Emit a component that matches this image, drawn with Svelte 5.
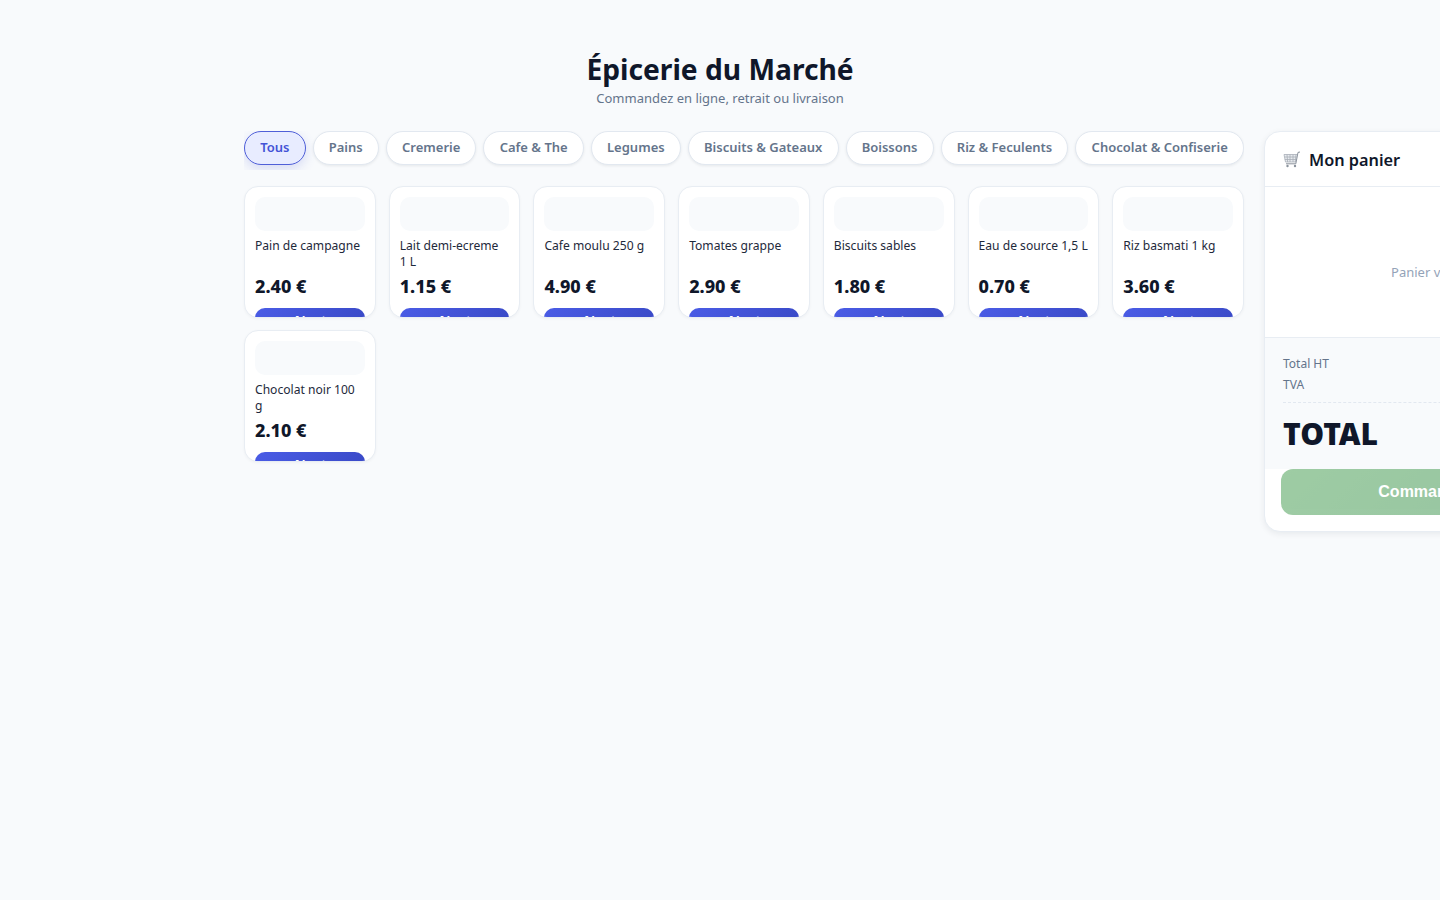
<script>
  const categories = [
    'Tous', 'Pains', 'Cremerie', 'Cafe & The', 'Legumes',
    'Biscuits & Gateaux', 'Boissons', 'Riz & Feculents', 'Chocolat & Confiserie',
  ];

  const products = [
    { name: 'Pain de campagne', price: 2.4 },
    { name: 'Lait demi-ecreme 1\u00a0L', price: 1.15 },
    { name: 'Cafe moulu 250 g', price: 4.9 },
    { name: 'Tomates grappe', price: 2.9 },
    { name: 'Biscuits sables', price: 1.8 },
    { name: 'Eau de source 1,5 L', price: 0.7 },
    { name: 'Riz basmati 1 kg', price: 3.6 },
    { name: 'Chocolat noir 100 g', price: 2.1 },
  ];

  let active = $state('Tous');
</script>

<div class="page">
  <header>
    <h1>Épicerie du Marché</h1>
    <p>Commandez en ligne, retrait ou livraison</p>
  </header>

  <div class="layout">
    <section class="shop">
      <div class="filters">
        {#each categories as cat}
          <button class="pill" class:active={active === cat} onclick={() => (active = cat)}>{cat}</button>
        {/each}
      </div>
      <div class="grid">
        {#each products as p}
          <article class="card">
            <div class="thumb"></div>
            <div class="name">{p.name}</div>
            <div class="price">{p.price.toFixed(2)} €</div>
            <button class="add">+ Ajouter</button>
          </article>
        {/each}
      </div>
    </section>

    <aside class="cart">
      <div class="cart-head">
        <svg class="cart-icon" viewBox="0 0 18 17" width="18" height="17" aria-hidden="true">
          <path class="cart-fill" d="M1 3.5h13l-1 7.5H2.5z" />
          <path class="cart-line" d="M1 3.5h13M1.4 6h12.3M1.8 8.5h11.6M2.5 11h10.4M4 3.5l.6 7.5M7 3.5v7.5M10 3.5v7.5M13 3.5l-.7 7.5M1 3.5l1.5 7.5" />
          <path class="cart-line dark" d="M17 1l-2 .4-2.2 11.4H3" />
          <circle class="cart-wheel" cx="4.5" cy="15" r="1.2" />
          <circle class="cart-wheel" cx="12" cy="15" r="1.2" />
        </svg>
        <h2>Mon panier</h2>
      </div>
      <div class="cart-empty">Panier vide</div>
      <div class="summary">
        <div class="row"><span>Total HT</span><span>0.00 €</span></div>
        <div class="row"><span>TVA</span><span>0.00 €</span></div>
        <div class="row total"><span>TOTAL</span><span>0.00 €</span></div>
      </div>
      <div class="cart-foot">
        <button class="order" disabled>Commander</button>
      </div>
    </aside>
  </div>
</div>

<style>
  :global(body) {
    background: #f8fafc;
    overflow-x: hidden;
    font-family: "Noto Sans", "Open Sans", sans-serif;
    color: #0f172a;
  }

  .page {
    height: 900px;
    overflow: hidden;
  }

  header {
    padding-top: 48px;
    text-align: center;
  }

  h1 {
    margin: 0;
    font-size: 28.2px;
    line-height: 42px;
    font-weight: 700;
    color: #0f172a;
  }

  header p {
    margin: 0;
    font-size: 13px;
    line-height: 17px;
    color: #64748b;
  }

  .layout {
    display: flex;
    gap: 20px;
    width: 952px;
    margin: 24px auto 0;
    align-items: flex-start;
  }

  .shop {
    flex: none;
    width: 1000px;
  }

  .filters {
    display: flex;
    gap: 7px;
    height: 39px;
    overflow: hidden;
  }

  .pill {
    flex: 1 1 auto;
    height: 34px;
    padding: 0 15px 2px;
    border: 1px solid #e2e8f0;
    border-radius: 17px;
    background: #fff;
    color: #64748b;
    font-family: "Noto Sans", sans-serif;
    font-size: 13px;
    font-weight: 600;
    box-shadow: 0 1px 3px rgba(15, 23, 42, 0.08);
    cursor: pointer;
  }

  .pill.active {
    background: #e8ecff;
    border: 1.5px solid #4f5fd8;
    color: #4353d6;
    box-shadow: 0 4px 12px rgba(79, 95, 216, 0.2);
  }

  .grid {
    display: grid;
    grid-template-columns: repeat(7, 1fr);
    grid-auto-rows: 131.7px;
    gap: 12.4px 13px;
    margin-top: 16px;
  }

  .card {
    box-sizing: border-box;
    display: flex;
    flex-direction: column;
    padding: 10px;
    background: #fff;
    border: 1px solid #e8edf3;
    border-radius: 14px;
    overflow: hidden;
    box-shadow: 0 1px 3px rgba(15, 23, 42, 0.04);
  }

  .thumb {
    flex: none;
    height: 34px;
    background: #f8fafc;
    border-radius: 10px;
  }

  .name {
    flex: none;
    height: 32px;
    margin-top: 7px;
    font-size: 12.1px;
    line-height: 16px;
    color: #1e293b;
  }

  .price {
    flex: none;
    margin-top: 4px;
    font-size: 18px;
    line-height: 24px;
    font-weight: 800;
    color: #0f172a;
  }

  .add {
    flex: none;
    height: 25px;
    margin-top: 10px;
    border: none;
    border-radius: 10px;
    background: linear-gradient(135deg, #4a5ce6, #3848c4);
    color: #fff;
    font-family: "Liberation Sans", sans-serif;
    font-size: 13px;
    font-weight: 700;
  }

  .cart {
    flex: none;
    width: 320px;
    background: #fff;
    border: 1px solid #e8edf3;
    border-radius: 16px;
    overflow: hidden;
    box-shadow: 0 2px 6px rgba(15, 23, 42, 0.07);
  }

  .cart-head {
    display: flex;
    align-items: center;
    gap: 8px;
    height: 55px;
    padding: 1px 18px 0;
    border-bottom: 1px solid #e8edf3;
    box-sizing: border-box;
  }

  .cart-icon {
    flex: none;
  }

  .cart-fill {
    fill: #e8ebef;
  }

  .cart-line {
    fill: none;
    stroke: #a8afb8;
    stroke-width: 0.8;
  }

  .cart-line.dark {
    stroke: #8a929c;
    stroke-width: 1;
  }

  .cart-wheel {
    fill: #8a929c;
  }

  h2 {
    margin: 0;
    font-size: 16.3px;
    font-weight: 600;
    color: #0f172a;
  }

  .cart-empty {
    height: 151px;
    padding-top: 20px;
    display: flex;
    align-items: center;
    justify-content: center;
    font-size: 13px;
    color: #94a3b8;
    border-bottom: 1px solid #e8edf3;
    box-sizing: border-box;
  }

  .summary {
    padding: 15px 18px 15px;
    background: #f8fafc;
  }

  .row {
    display: flex;
    justify-content: space-between;
    font-size: 12px;
    line-height: 21px;
    color: #64748b;
  }

  .row.total {
    margin-top: 7px;
    padding-top: 11px;
    border-top: 1px dashed #e2e8f0;
    font-size: 30px;
    line-height: 40px;
    font-weight: 900;
    color: #0f172a;
  }

  .cart-foot {
    padding: 0 16px 16px;
  }

  .order {
    width: 100%;
    height: 46px;
    border: none;
    border-radius: 12px;
    background: linear-gradient(135deg, #3f9a4a, #2f8a45);
    color: #fff;
    font-family: "Liberation Sans", sans-serif;
    font-size: 16px;
    font-weight: 700;
    opacity: 0.5;
  }
</style>
